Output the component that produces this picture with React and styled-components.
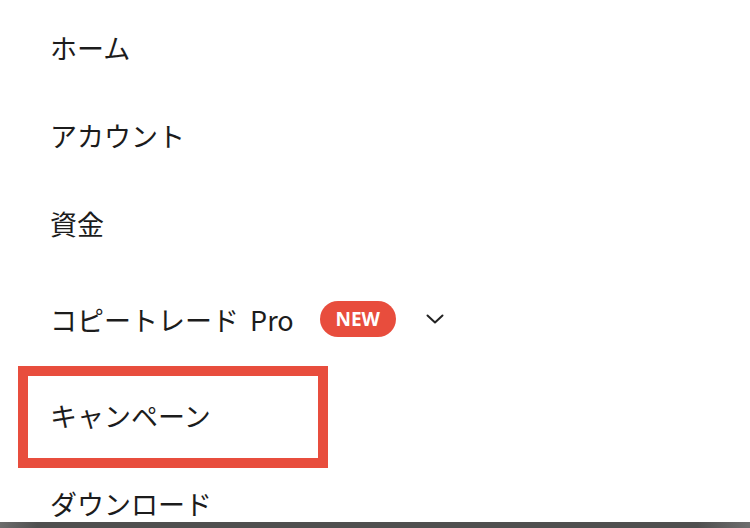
import React from "react";
import styled, { createGlobalStyle } from "styled-components";

const Global = createGlobalStyle`
  html, body { margin: 0; padding: 0; background: #fff; }
  body { font-family: "Noto Sans CJK JP", "Noto Sans", sans-serif; }
`;

const Page = styled.div`
  height: 528px;
  display: flex;
  flex-direction: column;
  overflow: hidden;
  background: #fff;
`;

const Menu = styled.ul`
  flex: 1;
  margin: 0;
  padding: 3px 0 0;
  list-style: none;
  display: flex;
  flex-direction: column;
  overflow: hidden;
`;

const Item = styled.li`
  position: relative;
  flex: 0 0 88px;
  height: 88px;
  margin-top: ${(p) => (p.$extra ? "8px" : "0")};
  padding-left: 50px;
  display: flex;
  align-items: center;
  font-size: 27px;
  color: #1c1c1c;
`;

const Label = styled.span`
  line-height: 1;
  word-spacing: 5px;
`;

const Badge = styled.span`
  margin-left: 26px;
  width: 76px;
  height: 36px;
  border-radius: 18px;
  background: #e84d3d;
  color: #fff;
  font-family: "Open Sans", "Noto Sans", sans-serif;
  font-weight: 700;
  font-size: 19px;
  display: inline-flex;
  align-items: center;
  justify-content: center;
`;

const Chevron = styled.svg`
  margin-left: 30px;
  width: 18px;
  height: 10px;
`;

const Highlight = styled.span`
  position: absolute;
  left: 18px;
  top: -5px;
  width: 310px;
  height: 102px;
  box-sizing: border-box;
  border: 10px solid #e84d3d;
  pointer-events: none;
`;

const BottomBar = styled.div`
  flex: 0 0 6px;
  height: 6px;
  background: linear-gradient(90deg, #6c6c6c 0%, #4f4f4f 5%, #4f4f4f 93%, #6e6e6e 100%);
`;

export default function App() {
  return (
    <>
      <Global />
      <Page>
        <Menu>
          <Item><Label>ホーム</Label></Item>
          <Item><Label>アカウント</Label></Item>
          <Item><Label>資金</Label></Item>
          <Item $extra>
            <Label>コピートレード Pro</Label>
            <Badge>NEW</Badge>
            <Chevron viewBox="0 0 18 10" fill="none">
              <path d="M1.5 1.5 L9 8.5 L16.5 1.5" stroke="#222" strokeWidth="2" strokeLinecap="round" strokeLinejoin="round" />
            </Chevron>
          </Item>
          <Item $extra>
            <Label>キャンペーン</Label>
            <Highlight />
          </Item>
          <Item><Label>ダウンロード</Label></Item>
        </Menu>
        <BottomBar />
      </Page>
    </>
  );
}
